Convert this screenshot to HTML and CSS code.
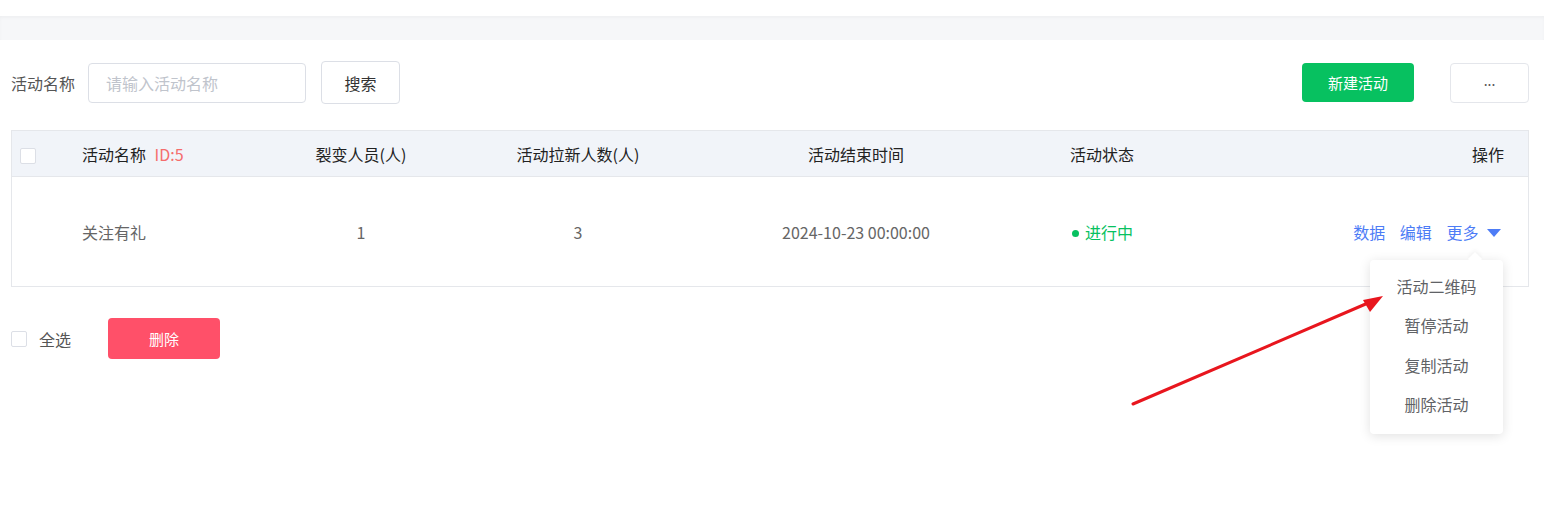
FILE: index.html
```html
<!DOCTYPE html>
<html lang="zh-CN">
<head>
    <meta charset="utf-8">
    <title>活动列表</title>
    <link rel="stylesheet" href="styles.css">
</head>
<body>
    <div class="topbar"></div>
    <div class="band"></div>

    <div class="page">
        <div class="toolbar">
            <label class="field-label">活动名称</label>
            <input type="text" class="search-input" placeholder="请输入活动名称">
            <button class="btn btn-plain search-btn">搜索</button>
            <div class="spacer"></div>
            <button class="btn btn-green">新建活动</button>
            <button class="btn btn-plain dots-btn">...</button>
        </div>

        <div class="table">
            <div class="tr thead">
                <div class="td c-check"><span class="checkbox"></span></div>
                <div class="td c-name">活动名称 <span class="id-tag">ID:5</span></div>
                <div class="td c-center">裂变人员(人)</div>
                <div class="td c-center">活动拉新人数(人)</div>
                <div class="td c-center">活动结束时间</div>
                <div class="td c-status">活动状态</div>
                <div class="td c-ops">操作</div>
            </div>
            <div class="tr tbody">
                <div class="td c-check"></div>
                <div class="td c-name">关注有礼</div>
                <div class="td c-center">1</div>
                <div class="td c-center">3</div>
                <div class="td c-center">2024-10-23 00:00:00</div>
                <div class="td c-status"><span class="dot"></span>进行中</div>
                <div class="td c-ops">
                    <a class="link">数据</a>
                    <a class="link">编辑</a>
                    <span class="more">
                        <a class="link">更多</a>
                        <span class="caret"></span>
                        <div class="dropdown">
                            <div class="dd-item">活动二维码</div>
                            <div class="dd-item">暂停活动</div>
                            <div class="dd-item">复制活动</div>
                            <div class="dd-item">删除活动</div>
                        </div>
                    </span>
                </div>
            </div>
        </div>

        <div class="footer">
            <span class="checkbox"></span>
            <span class="select-all">全选</span>
            <button class="btn btn-red">删除</button>
        </div>
    </div>

    <svg class="annotation" width="1544" height="524" viewBox="0 0 1544 524">
        <line x1="1133" y1="404" x2="1368" y2="303" stroke="#e8161e" stroke-width="3" stroke-linecap="round"/>
        <polygon points="1383,296 1363,300 1370,312" fill="#e8161e"/>
    </svg>
</body>
</html>
```

FILE: styles.css
```css
* {
    box-sizing: border-box;
}

body {
    margin: 0;
    font-family: "Noto Sans CJK SC", "Liberation Sans", sans-serif;
    font-size: 16px;
    color: #333;
    background: #fff;
    position: relative;
    height: 524px;
    overflow: hidden;
}

.topbar {
    height: 16px;
    background: #fff;
}

.band {
    height: 24px;
    background: #f6f7f9;
    box-shadow: inset 0 2px 3px rgba(0, 0, 0, 0.03);
}

.page {
    padding: 0 15px 0 11px;
}

/* search row */
.toolbar {
    display: flex;
    align-items: center;
    height: 43px;
    margin-top: 21px;
}

.field-label {
    color: #555;
    width: 77px;
}

.search-input {
    width: 218px;
    height: 40px;
    border: 1px solid #dcdfe6;
    border-radius: 4px;
    padding: 0 17px;
    font: inherit;
    color: #333;
    outline: none;
}

.search-input::placeholder {
    color: #c0c4cc;
}

.btn {
    font: inherit;
    border-radius: 4px;
    cursor: pointer;
}

.btn-plain {
    background: #fff;
    border: 1px solid #dcdfe6;
    color: #333;
}

.search-btn {
    margin-left: 15px;
    width: 79px;
    height: 43px;
}

.spacer {
    flex: 1;
}

.btn-green {
    width: 112px;
    height: 39px;
    border: none;
    background: #07c160;
    color: #fff;
    font-size: 15px;
}

.dots-btn {
    margin-left: 36px;
    width: 79px;
    height: 40px;
    font-size: 14px;
    color: #555;
    border-color: #e4e6eb;
    padding-bottom: 6px;
}

/* table */
.table {
    margin-top: 26px;
    border: 1px solid #e5e7eb;
}

.tr {
    display: grid;
    grid-template-columns: 60px 179px 220px 214px 342px 234px 1fr;
    align-items: center;
}

.thead {
    height: 46px;
    background: #f1f4f9;
    border-bottom: 1px solid #e5e7eb;
    color: #222;
}

.tbody {
    height: 109px;
    color: #666;
}

.c-check {
    padding-left: 8px;
}

.c-name {
    padding-left: 10px;
}

.c-center {
    text-align: center;
}

.c-status {
    padding-left: 43px;
}

.c-ops {
    text-align: right;
    padding-right: 27px;
}

.thead .c-ops {
    padding-right: 24px;
}

.id-tag {
    color: #f56c6c;
    margin-left: 5px;
}

.checkbox {
    display: inline-block;
    width: 16px;
    height: 16px;
    border: 1px solid #dcdfe6;
    border-radius: 2px;
    background: #fff;
    vertical-align: middle;
}

.dot {
    display: inline-block;
    width: 7px;
    height: 7px;
    border-radius: 50%;
    background: #07c160;
    margin: 0 6px 2px 2px;
    vertical-align: middle;
}

.c-status {
    color: #07c160;
}

.thead .c-status {
    color: #222;
}

.link {
    color: #4d7cf6;
    margin-left: 11px;
    cursor: pointer;
}

.more {
    position: relative;
}

.caret {
    display: inline-block;
    width: 0;
    height: 0;
    border-left: 7px solid transparent;
    border-right: 7px solid transparent;
    border-top: 8px solid #4d7cf6;
    margin-left: 5px;
    vertical-align: 2px;
}

.dropdown {
    position: absolute;
    top: 40px;
    right: -2px;
    width: 133px;
    padding: 7px 0 9px;
    background: #fff;
    border-radius: 4px;
    box-shadow: 0 2px 12px rgba(0, 0, 0, 0.12);
    text-align: center;
    z-index: 2;
}

.dropdown::before {
    content: "";
    position: absolute;
    top: -6px;
    right: 23px;
    width: 10px;
    height: 10px;
    background: #fff;
    transform: rotate(45deg);
    box-shadow: -2px -2px 4px rgba(0, 0, 0, 0.04);
}

.dd-item {
    position: relative;
    height: 39.5px;
    line-height: 39.5px;
    color: #606266;
}

/* footer */
.footer {
    display: flex;
    align-items: center;
    margin-top: 31px;
    height: 41px;
}

.select-all {
    margin-left: 12px;
    color: #555;
}

.btn-red {
    margin-left: 37px;
    width: 112px;
    height: 41px;
    border: none;
    background: #ff5069;
    color: #fff;
    font-size: 15px;
}

.annotation {
    position: absolute;
    left: 0;
    top: 0;
    pointer-events: none;
    z-index: 3;
}
```
